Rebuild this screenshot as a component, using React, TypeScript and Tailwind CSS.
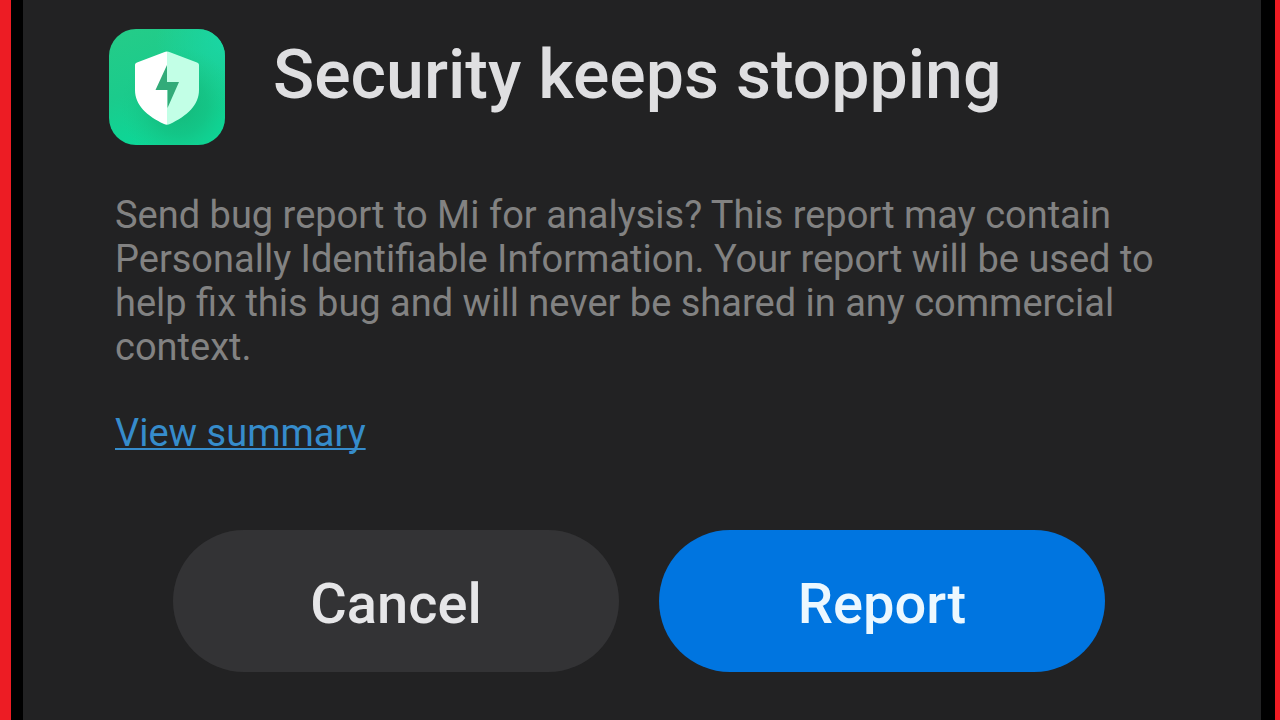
import React from "react";

const SecurityIcon = () => (
  <svg viewBox="0 0 116 116" className="size-[116px] shrink-0" aria-hidden="true">
    <defs>
      <linearGradient id="tile" x1="0" y1="0" x2="0.35" y2="1">
        <stop offset="0" stopColor="#25cc88" />
        <stop offset="0.55" stopColor="#1bcb8c" />
        <stop offset="1" stopColor="#0bd898" />
      </linearGradient>
      <radialGradient id="glow" cx="1" cy="0.1" r="0.6">
        <stop offset="0" stopColor="#1ad6a4" />
        <stop offset="1" stopColor="#1ad6a4" stopOpacity="0" />
      </radialGradient>
      <radialGradient id="shade" cx="0.6" cy="0.66" r="0.5">
        <stop offset="0" stopColor="#14b87a" />
        <stop offset="0.5" stopColor="#16be80" stopOpacity="0.7" />
        <stop offset="1" stopColor="#1cc888" stopOpacity="0" />
      </radialGradient>
    </defs>
    <rect width="116" height="116" rx="27" fill="url(#tile)" />
    <rect width="116" height="116" rx="27" fill="url(#glow)" />
    <rect width="116" height="116" rx="27" fill="url(#shade)" />
    <path
      d="M58 22.5c-1 0-2 .3-3 .8L28 33.500c-1.300.5-2 1.300-2 2.700V61c0 15 12 26 29 34 1 .5 2 .8 3 .8z"
      fill="#fff"
    />
    <path
      d="M58 22.500c1 0 2 .3 3 .8L88 33.500c1.300.5 2 1.300 2 2.700V61c0 15-12 26-29 34-1 .5-2 .8-3 .8z"
      fill="#c2ffe6"
    />
    <path d="M58 36v17h12L58.500 79V61H46.500z" fill="#32ab79" />
  </svg>
);

export default function App() {
  return (
    <div className="min-h-screen bg-black border-l-[11px] border-r-[5px] border-[#ed1c24] pl-3 pr-[14px] flex font-['Roboto',sans-serif]">
      <main className="flex-1 bg-[#222223] pl-[86px] pr-20 pt-[29px] pb-12">
        <header className="flex items-start gap-12">
          <SecurityIcon />
          <h1 className="text-[68px] leading-[92px] font-medium text-[#dfdfe1]">
            Security keeps stopping
          </h1>
        </header>

        <div className="mt-12 pl-1.5 text-[38px] leading-[44px]">
          <p className="text-[#828282]">
            Send bug report to Mi for analysis? This report may contain
            Personally Identifiable Information. Your report will be used to
            help fix this bug and will never be shared in any commercial
            context.
          </p>
          <a
            href="#summary"
            className="inline-block mt-[42px] text-[#368ccb] underline decoration-2 underline-offset-2 [text-decoration-skip-ink:none]"
          >
            View summary
          </a>
        </div>

        <div className="mt-[75px] pl-16 pr-[76px] flex gap-10 text-[56px] leading-[60px] font-medium">
          <button
            type="button"
            className="flex-1 h-[142px] pt-1.5 rounded-full bg-[#333335] text-[#e6e6e8]"
          >
            Cancel
          </button>
          <button
            type="button"
            className="flex-1 h-[142px] pt-1.5 rounded-full bg-[#0075e0] text-[#ecf8ff]"
          >
            Report
          </button>
        </div>
      </main>
    </div>
  );
}
